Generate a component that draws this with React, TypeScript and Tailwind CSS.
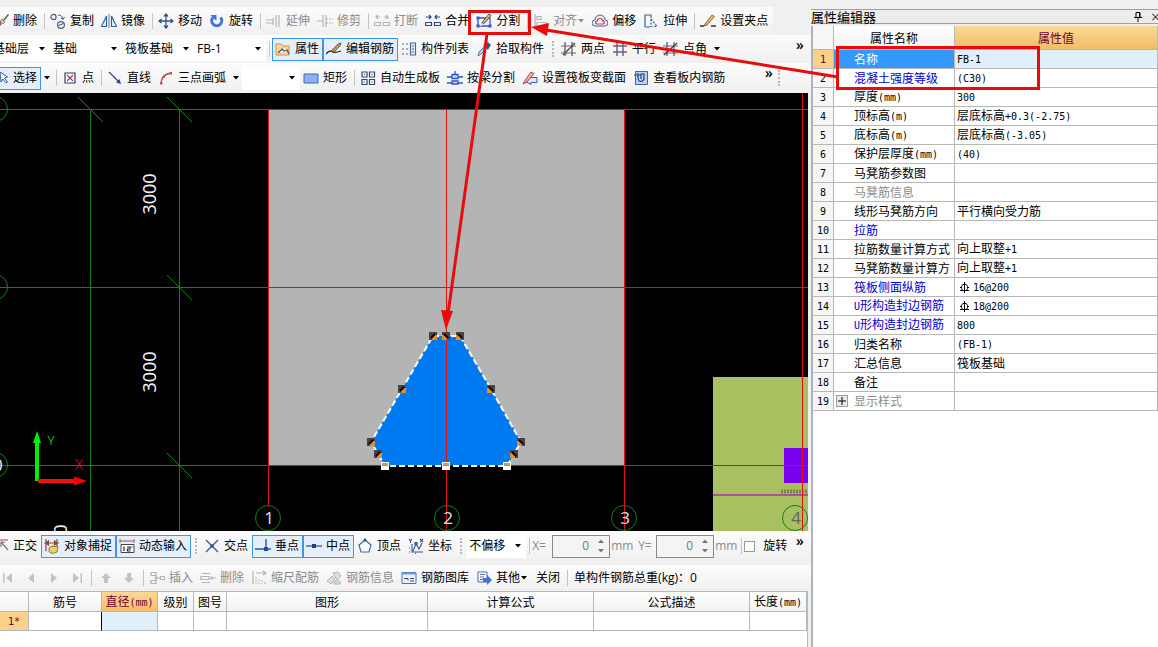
import { ReactNode, useState } from 'react';

const UI_FONT = "font-['Open_Sans','Noto_Sans_CJK_SC',sans-serif]";
const GRID_FONT = "font-['Noto_Sans_CJK_SC',sans-serif]";

const blue = '#2f5fa8';
const gray = '#b4b4b4';

const icons: Record<string, ReactNode> = {
  brush: (
    <>
      <path d="M2 9l5-1 2 3-4 4-4-1z" fill="#8a55b0" />
      <path d="M7 8l2-2 3 3-2 2z" fill="#d9c27a" stroke="#8a6d2a" strokeWidth=".6" />
      <path d="M10 7l5-6 1 1-5 6z" fill="#555" />
    </>
  ),
  copy: (
    <g fill="none" stroke="#4a5f86" strokeWidth="1.2">
      <circle cx="3.5" cy="4" r="2.6" />
      <circle cx="11" cy="12" r="3.4" />
      <path d="M8.5 12.5l5-2" />
      <path d="M8 2c3 0 4 1 5 4m-2-1l2 1.500 1.500-2.500" strokeWidth="1" />
    </g>
  ),
  mirror: (
    <g fill="none" stroke={blue} strokeWidth="1.200">
      <path d="M5.500 3v10.500h-5zM10.500 3v10.500h5z" />
      <path d="M8 1v14" stroke="#7790bd" />
    </g>
  ),
  move: <path d="M8 1v14M1 8h14M6 3.500L8 1l2 2.500M6 12.500L8 15l2-2.500M3.500 6L1 8l2.500 2M12.500 6L15 8l-2.500 2" fill="none" stroke="#35538a" strokeWidth="1.300" />,
  rotate: (
    <>
      <path d="M4 4.500a5 5 0 1 0 7.500 0" fill="none" stroke="#3f74d8" strokeWidth="3" />
      <path d="M1.500 2h6v6z" fill="#3f74d8" />
    </>
  ),
  extend: (
    <g fill="none" stroke={gray} strokeWidth="1.200">
      <path d="M0 7h7M0 10h7M10 2v12M13 2v12" />
      <path d="M7 5v7" />
    </g>
  ),
  trim: (
    <g fill="none" stroke={gray} strokeWidth="1.200">
      <path d="M0 8h6M6 2v12M9 2v12M9 6h2M9 10h2" />
      <path d="M12 6h4M12 10h4" strokeDasharray="2 1" />
    </g>
  ),
  break: (
    <g fill="none" stroke={gray} strokeWidth="1.200">
      <path d="M2 4h4M10 4h4M4 2L2 4l2 2M12 2l2 2-2 2M0.500 9.500h6v3h-6zM9.500 9.500h6v3h-6z" />
    </g>
  ),
  merge: (
    <g fill="none" stroke="#2c4a86" strokeWidth="1.200">
      <path d="M1 4h5M10 4h5M4 2l2 2-2 2M12 2l-2 2 2 2M0.500 9.500h6v3h-6zM9.500 9.500h6v3h-6z" />
    </g>
  ),
  split: (
    <>
      <path d="M2 5h12v8H2z" fill="none" stroke="#2f57d0" strokeWidth="1.300" />
      <path d="M3 13L11 5l3 3-9 5z" fill="#cfe0ff" />
      <path d="M0.500 3.500h3v3h-3zM.5 11.500h3v3h-3zM12.500 11.500h3v3h-3z" fill="#2f57d0" />
      <path d="M6 9.500L13 1l2 1.500L8 10.500z" fill="#e8b860" stroke="#333" strokeWidth=".8" />
    </>
  ),
  align: <path d="M2 1v14M4 3.500h4v3H4zM4 9.500h9v4H4z" fill="none" stroke={gray} strokeWidth="1.200" />,
  offset: (
    <>
      <path d="M3 13a3 3 0 0 1 0-6 5 5 0 0 1 10 0 3 3 0 0 1 0 6z" fill="#e3ecfb" stroke="#4467a8" />
      <path d="M5 11a1.500 1.500 0 0 1 .5-3 2.500 2.500 0 0 1 5 0 1.500 1.500 0 0 1 .5 3z" fill="#fff" stroke="#d03838" strokeWidth="1.200" />
    </>
  ),
  stretch: (
    <g fill="none" stroke="#3c5f9b" strokeWidth="1.200">
      <path d="M2 14V2h6v3M2 14h5" />
      <path d="M8 6l6 7.500H8z" strokeDasharray="2 1.500" />
    </g>
  ),
  grip: (
    <>
      <path d="M0 13h4M11 13h5" stroke="#333" strokeWidth="1.500" />
      <path d="M5 11L12 2l2.500 1.500L7 12l-3 1z" fill="#e9bc62" stroke="#6b5424" strokeWidth=".8" />
    </>
  ),
  property: (
    <>
      <path d="M1 3h5l1 2h7v9H1z" fill="#fbe0b0" stroke="#d78a2c" />
      <path d="M4 7h8v5H4z" fill="#fff" stroke="#e0a050" strokeWidth=".6" />
      <path d="M3 12l4-4 2 2 3-1 2 4" fill="none" stroke="#555" strokeWidth="1.300" />
    </>
  ),
  editBar: (
    <>
      <path d="M0 13c3-4 5-3 7-2s5 0 8-1" fill="none" stroke="#222" strokeWidth="1.300" />
      <path d="M5 10L12 3l3-1-1 3-6 6z" fill="#c79a50" stroke="#4b3a1b" strokeWidth=".7" />
    </>
  ),
  list: (
    <g fill="none" stroke="#4c6890" strokeWidth="1.200">
      <path d="M1 3h2M1 8h2M1 13h2M5 3h2M5 8h2M5 13h2" />
      <path d="M9.500 2h5v12h-5z" fill="#e4ecf8" />
      <path d="M11 5h2M11 8h2M11 11h2" />
    </g>
  ),
  picker: (
    <>
      <path d="M2 15l1-4 5-5 2 2-5 5z" fill="#b8d2f0" stroke="#456fae" strokeWidth=".9" />
      <path d="M7 4l5 5 1-2 2-3-3-3-3 2z" fill="#2d5a9e" />
    </>
  ),
  twoPoint: (
    <g fill="none" strokeWidth="1.200">
      <path d="M0 5h15M0 12h15" stroke="#a0506a" />
      <path d="M4 1v14M11 1v14" stroke="#4a5568" />
      <path d="M2 14L14 2" stroke="#444" />
      <path d="M2.500 10.500h3v3h-3z" fill="#3c8a4a" />
    </g>
  ),
  parallel: (
    <g fill="none" strokeWidth="1.300">
      <path d="M1 5h14M1 11h14" stroke="#a0506a" />
      <path d="M5 1v14M11 1v14" stroke="#4a5a88" />
    </g>
  ),
  pointAngle: (
    <g fill="none" strokeWidth="1.200">
      <path d="M0 5h15M0 12h15" stroke="#a0506a" />
      <path d="M4 1v14M11 1v14" stroke="#5a4a78" />
      <path d="M1 14L14 2" stroke="#444" />
    </g>
  ),
  cursor: <path d="M7 2l1 10 2-3 3 4 1.500-1-3-4 3-1z" fill="#fff" stroke={blue} />,
  point: (
    <>
      <path d="M3 3h10v10H3z" fill="#fff" stroke="#2b3f78" strokeWidth="1.200" />
      <path d="M5 5l6 6M11 5l-6 6" stroke="#b03060" strokeWidth="1.200" />
    </>
  ),
  line: (
    <>
      <path d="M2 2l10 10" stroke="#2b4a86" strokeWidth="1.300" />
      <path d="M14 14l-5-1.500 3.500-3.500z" fill="#2b4a86" />
    </>
  ),
  arc: (
    <>
      <path d="M3 14C3 8 6 4 13 3" fill="none" stroke="#a84848" strokeWidth="1.300" />
      <path d="M2 12h2.500v2.500H2zM5 5.500h2V8H5zM11.500 2H14v2.500h-2.500z" fill="#c65656" />
    </>
  ),
  rect: <path d="M1 4h14v9H1z" fill="#8fb0ee" stroke="#3e66c0" />,
  autoSlab: <path d="M2 2h5v5H2zM9.500 2h5v5h-5zM2 9.500h5v5H2zM9.500 9.500h5v5h-5zM4 4.500h1M11.500 4.500h1M4 12h1M11.500 12h1" fill="none" stroke="#334a78" strokeWidth="1.200" />,
  beamSplit: (
    <g fill="none" stroke="#2f55c0" strokeWidth="1.300">
      <path d="M0 7h5M11 7h5M0 13h16" />
      <path d="M5 4.500h6v4H5zM8 1v3M5 11h6v3H5z" fill="#c7d8fa" />
    </g>
  ),
  section: (
    <>
      <path d="M8 7.500h7v5H9v2l-6-3.500z" fill="#dfe8fb" stroke="#3a5bb0" />
      <path d="M2 12L9 2l3 1.500L5 12l-4 2z" fill="#f0b0a8" stroke="#a23a30" strokeWidth=".9" />
    </>
  ),
  viewBar: (
    <>
      <path d="M2.500 1.500h12v13h-12z" fill="#bcd3f6" stroke="#3f66b0" />
      <path d="M1 5h7M5 3v5c0 5 6 4 6 0V4h-3v5" fill="none" stroke="#24467e" strokeWidth="1.200" />
    </>
  ),
  ortho: (
    <>
      <path d="M1 2h14" stroke="#c77" strokeWidth="1.500" />
      <path d="M8 4l7 8M8 4v5M8 4l4 .5" fill="none" stroke="#777" strokeWidth="1.200" />
    </>
  ),
  snap: (
    <>
      <path d="M0 5h15M2 1v12M13 1v8M2 5l2.500-2v4zM13 5l-2.500-2v4z" fill="none" stroke="#8f4a3a" strokeWidth="1.200" />
      <path d="M5 10l3-2 6 1-1 5-5 1.500-3-2z" fill="#f0cf6a" stroke="#9a7a25" />
    </>
  ),
  dynInput: (
    <>
      <path d="M1 3h14M1 1v4M15 1v4" stroke="#a55" />
      <path d="M2 6.500h13v8H2z" fill="#fff" stroke="#444" />
      <path d="M5 8.500v4.500M8 9h3v2H8.500v2h3M13 8.500v1" fill="none" stroke="#222" strokeWidth="1.200" />
    </>
  ),
  cross: (
    <>
      <path d="M2 2l12 12M14 2L2 14" stroke="#35568f" strokeWidth="1.300" />
      <path d="M6.500 6.500h3v3h-3z" fill="#1d4f9f" />
    </>
  ),
  perp: (
    <>
      <path d="M0 11h16M11 1v10" stroke="#35568f" strokeWidth="1.400" />
      <path d="M9 9h4v4H9z" fill="#1d4f9f" />
    </>
  ),
  mid: (
    <>
      <path d="M0 8h16" stroke="#35568f" strokeWidth="1.300" />
      <path d="M6 6h4v4H6z" fill="#123f8f" />
    </>
  ),
  vertex: (
    <>
      <path d="M8 2l6 5-2 7H4L2 7z" fill="#fff" stroke="#3b6aa8" strokeWidth="1.200" />
      <circle cx="8" cy="2" r="1.500" fill="#1d4f9f" />
    </>
  ),
  coord: (
    <g fill="none" stroke="#35568f" strokeWidth="1.100">
      <path d="M4 6v8h11M5 13l3-7 3 5 3-6" />
      <path d="M1 1l1.500 2L4 1M2.500 3v2M12 1l3 3M15 1l-3 3M1 10h1M1 14h1M7 15.500h1" />
      <path d="M7 4.500h2v2H7z" fill="#35568f" />
    </g>
  ),
  insert: <path d="M2 2.500h5v3H2zM2 10.500h5v3H2zM6 8h5M8 6L6 8l2 2M11.500 6.500h4v3h-4z" fill="none" stroke={gray} strokeWidth="1.200" />,
  remove: <path d="M2 3.500h8M2 12.500h8M1 6.500h8v3H1zM10 8h6M12 6v4" fill="none" stroke={gray} strokeWidth="1.200" />,
  scaleBar: (
    <>
      <path d="M2 1v13M5 3h10M12 1l3 2-3 2" fill="none" stroke={gray} strokeWidth="1.200" />
      <path d="M5 7v7M8 9v5M11 10v4M14 12v2" stroke={gray} strokeDasharray="2 1" />
    </>
  ),
  barInfo: <path d="M1 11l5-5 3 3-4 5zM7 3l5-1 3 4-4 4zM8 11h6v3H8z" fill="#dcdcdc" stroke={gray} />,
  barLib: (
    <>
      <path d="M1 2.500h14v11H1z" fill="#eef4fd" stroke="#4573b8" />
      <path d="M1 2.500h14v2H1z" fill="#6b9be0" />
      <path d="M3 8.500h4v2M9 8.500h4M9 11h4" fill="none" stroke="#345" />
    </>
  ),
  other: (
    <>
      <path d="M2 2h9v10H2z" fill="#fff" stroke="#4a6ba8" />
      <path d="M4 4.500h5M4 7h4M4 9.500h3" stroke="#4a6ba8" />
      <path d="M7 8h4V5l5 5-5 5v-3H7z" fill="#3f74d8" />
    </>
  ),
  first: <path d="M3 3h1.500v10H3zM12 3v10L6 8z" fill="#c2c2c2" />,
  prev: <path d="M11 3v10L5 8z" fill="#c2c2c2" />,
  next: <path d="M5 3v10l6-5z" fill="#c2c2c2" />,
  last: <path d="M4 3v10l6-5zM11.500 3H13v10h-1.500z" fill="#c2c2c2" />,
  up: <path d="M8 3l5 5h-3v5H6V8H3z" fill="#c2c2c2" />,
  down: <path d="M8 13l5-5h-3V3H6v5H3z" fill="#c2c2c2" />,
};

function Icon({ name }: { name: string }) {
  return (
    <svg className="size-4 shrink-0" viewBox="0 0 16 16" aria-hidden="true">
      {icons[name]}
    </svg>
  );
}

function Caret({ className = '' }: { className?: string }) {
  return (
    <svg className={`h-1 w-2 shrink-0 ${className}`} viewBox="0 0 8 4" aria-hidden="true">
      <path d="M1 0h6L4 3.500z" fill="currentColor" />
    </svg>
  );
}

interface ToolProps {
  icon: string;
  label: string;
  active?: boolean;
  disabled?: boolean;
  menu?: boolean;
}

function Tool({ icon, label, active, disabled, menu }: ToolProps) {
  return (
    <button
      disabled={disabled}
      className={`flex h-[23px] shrink-0 items-center border pl-[2px] pr-[3px] whitespace-nowrap ${
        active ? 'border-[#3d96ee] bg-[#e4effb]' : 'border-transparent'
      } ${disabled ? 'text-[#8c8c8c]' : 'text-black'}`}
    >
      <Icon name={icon} />
      <span className="ml-1">{label}</span>
      {menu && <Caret />}
    </button>
  );
}

function DropArrow({ label }: { label: string }) {
  return (
    <button aria-label={label} className="flex h-[23px] w-3 shrink-0 items-center justify-center">
      <Caret />
    </button>
  );
}

function Sep() {
  return (
    <span className="flex w-[6px] shrink-0 justify-center">
      <span className="h-4 w-px bg-[#c4c4c4]" />
    </span>
  );
}

function Dots() {
  return (
    <span className="flex w-[10px] shrink-0 justify-center">
      <span className="h-4 border-l-2 border-dotted border-[#b8b8b8]" />
    </span>
  );
}

function Combo({ label, value, className }: { label: string; value: string; className: string }) {
  return (
    <div className={`relative flex h-[23px] shrink-0 items-center bg-white ${className}`}>
      <select aria-label={label} className="h-full w-full appearance-none bg-transparent pl-[3px] outline-none">
        <option>{value}</option>
      </select>
      <Caret className="pointer-events-none absolute right-1" />
    </div>
  );
}

function More() {
  return (
    <button aria-label="更多" className="mt-[2px] h-4 w-[10px] self-start text-sm leading-4 font-semibold">
      »
    </button>
  );
}

function NumberBox({ id }: { id: string }) {
  const [value, setValue] = useState(0);

  return (
    <div className="flex h-[23px] w-[58px] shrink-0 border border-[#8a8a8a] bg-[#f4f4f4] text-[#777]">
      <input
        id={id}
        value={value}
        onChange={(e) => setValue(Number(e.target.value) || 0)}
        className="w-full min-w-0 bg-transparent pr-1 text-right outline-none"
      />
      <div className="flex w-4 shrink-0 flex-col items-center justify-around">
        <button aria-label="增加" onClick={() => setValue(value + 1)}>
          <Caret className="rotate-180" />
        </button>
        <button aria-label="减少" onClick={() => setValue(value - 1)}>
          <Caret />
        </button>
      </div>
    </div>
  );
}

// Half-width characters take a narrow monospace face, Chinese keeps the grid font
function GridText({ text }: { text: string }) {
  return (
    <>
      {text.split(/([\x20-\x7e]+)/).map((part, i) =>
        i % 2 ? (
          <span key={i} className="font-['DejaVu_Sans_Mono',monospace] text-[10px]">
            {part}
          </span>
        ) : (
          part
        ),
      )}
    </>
  );
}

function Rebar() {
  return (
    <svg className="mr-1 ml-[3px] h-[11px] w-[9px] shrink-0" viewBox="0 0 9 11" role="img" aria-label="钢筋符号">
      <path d="M4.500 0v11M3 2.500h3M3 2.500C1 3 1 8 3 8.500M6 2.500c2 .5 2 5.500 0 6M0 5.500h2M7 5.500h2M0 8.500h9" fill="none" stroke="#000" />
    </svg>
  );
}

const toolbarRow = 'flex items-center bg-linear-to-b from-[#fcfcfc] to-[#f0f0f0]';

function Toolbars() {
  return (
    <div className="mt-[7px] overflow-hidden">
      <div className={`${toolbarRow} mr-[38px] -ml-[10px] h-7`}>
        <Tool icon="brush" label="删除" />
        <Sep />
        <Tool icon="copy" label="复制" />
        <Tool icon="mirror" label="镜像" />
        <Sep />
        <Tool icon="move" label="移动" />
        <Tool icon="rotate" label="旋转" />
        <Sep />
        <Tool icon="extend" label="延伸" disabled />
        <Tool icon="trim" label="修剪" disabled />
        <Sep />
        <Tool icon="break" label="打断" disabled />
        <Tool icon="merge" label="合并" />
        <Tool icon="split" label="分割" />
        <Sep />
        <Tool icon="align" label="对齐" disabled menu />
        <Tool icon="offset" label="偏移" />
        <Tool icon="stretch" label="拉伸" />
        <Sep />
        <Tool icon="grip" label="设置夹点" />
      </div>
      <div className={`${toolbarRow} -ml-[10px] h-7 pr-[6px]`}>
        <Combo label="楼层" value="基础层" className="w-[60px]" />
        <Combo label="构件分类" value="基础" className="w-[72px]" />
        <Combo label="构件类型" value="筏板基础" className="w-[72px]" />
        <Combo label="构件" value="FB-1" className="w-[72px]" />
        <Sep />
        <Tool icon="property" label="属性" active />
        <Tool icon="editBar" label="编辑钢筋" active />
        <Tool icon="list" label="构件列表" />
        <Tool icon="picker" label="拾取构件" />
        <Dots />
        <Tool icon="twoPoint" label="两点" />
        <Tool icon="parallel" label="平行" />
        <Tool icon="pointAngle" label="点角" />
        <DropArrow label="辅轴选项" />
        <span className="flex-1" />
        <More />
      </div>
      <div className={`${toolbarRow} -ml-[10px] h-[30px] pr-[27px]`}>
        <Tool icon="cursor" label="选择" active />
        <DropArrow label="选择方式" />
        <Sep />
        <Tool icon="point" label="点" />
        <Sep />
        <Tool icon="line" label="直线" />
        <Tool icon="arc" label="三点画弧" />
        <DropArrow label="画弧方式" />
        <Combo label="半径" value="" className="w-[58px]" />
        <Tool icon="rect" label="矩形" />
        <Sep />
        <Tool icon="autoSlab" label="自动生成板" />
        <Tool icon="beamSplit" label="按梁分割" />
        <Tool icon="section" label="设置筏板变截面" />
        <Tool icon="viewBar" label="查看板内钢筋" />
        <span className="flex-1" />
        <More />
        <Dots />
      </div>
    </div>
  );
}

const slab = '433,336 460,336 491,389 521,442 514,454 507,466 385,466 378,454 371,442 402,389';
const darkGrips = [[433, 336], [446, 336], [460, 336], [402, 389], [491, 389], [371, 442], [521, 442], [378, 454], [514, 454]];
const whiteGrips = [[385, 466], [446, 466], [507, 466]];
const axisRows = [109, 287, 465];
const ticks = [[90, 109], [179, 109], [179, 287], [179, 465]];
const bubbles = [
  { x: 268, label: '1', color: '#ddd' },
  { x: 447, label: '2', color: '#ddd' },
  { x: 624, label: '3', color: '#ddd' },
  { x: 795, label: '4', color: '#666' },
];

function Drawing() {
  return (
    <div className="mr-[3px] min-h-[438px] flex-1 bg-black">
      <svg className="block h-[438px] w-full font-['Noto_Sans',sans-serif]" role="img" aria-label="绘图区">
        <g transform="translate(0 -93)">
          <rect x="269" y="110" width="356" height="356" fill="#b4b4b4" />
          <rect x="713" y="377" width="100%" height="154" fill="#a8c060" />
          <rect x="784" y="448" width="100%" height="35" fill="#7a00f0" />
          <rect x="713" y="494" width="100%" height="2" fill="#b0509a" />
          <path d="M781 491.500h27" stroke="#7b8256" strokeWidth="4" strokeDasharray="2 1" />

          {axisRows.map((y) => (
            <rect key={y} y={y} width="268" height="1" fill="#128012" />
          ))}
          <g fill="none" stroke="#128012">
            {axisRows.map((y) => (
              <circle key={y} cx="-5" cy={y} r="12.500" />
            ))}
            <path d="M90.500 109v422M179.500 109v422" />
            {ticks.map(([x, y]) => (
              <path key={`${x}-${y}`} d={`M${x - 12} ${y - 12}l25 25`} />
            ))}
          </g>

          <polygon points={slab} fill="#007af0" />
          {axisRows.map((y) => (
            <rect key={y} x="268" y={y} width="100%" height="1" fill="#e01010" />
          ))}
          <path d="M268.500 109v397M446.500 109v422M624.500 109v422M802.500 93v438" stroke="#e01010" />
          <path d="M385 466.500h122" stroke="#000" strokeWidth="2" />
          <polygon points={slab} fill="none" stroke="#fff" strokeWidth="2" strokeDasharray="6 3" />

          {darkGrips.map(([x, y]) => (
            <g key={`${x}-${y}`}>
              <rect x={x - 4} y={y - 4} width="8" height="8" fill="#454545" />
              <rect x={x < 446 ? x - 1 : x - 4} y={y - 1} width="5" height="5" fill="#f08a20" />
              <path d={x < 446 ? `M${x - 2} ${y + 2}l4-4` : `M${x - 2} ${y - 2}l4 4`} stroke="#000" strokeWidth="2" />
            </g>
          ))}
          {whiteGrips.map(([x, y]) => (
            <g key={x}>
              <rect x={x - 4} y={y - 4} width="8" height="8" fill="#fff" />
              <path d={`M${x - 3} ${y - 3}h6v3h-6z`} fill="#c9a050" />
              <path d={`M${x - 3} ${y - 0.5}h6`} stroke="#40c0b0" />
            </g>
          ))}

          {bubbles.map((b) => (
            <g key={b.label}>
              <circle cx={b.x} cy="518" r="12.500" fill="none" stroke="#128012" />
              <text x={b.x + 1} y="524" textAnchor="middle" fontSize="17" fill={b.color}>
                {b.label}
              </text>
            </g>
          ))}
          <g fontSize="18" fill="#f0f0f0" textAnchor="middle">
            <text transform="translate(156 194) rotate(-90)">3000</text>
            <text transform="translate(156 372) rotate(-90)">3000</text>
            <text transform="translate(67 545) rotate(-90)">3000</text>
            <text x="-2" y="471" fontSize="16">0</text>
          </g>

          <path d="M37 481V440" stroke="#00f000" strokeWidth="4" />
          <path d="M37 431l4 12h-8z" fill="#00f000" />
          <path d="M38 481h38" stroke="#f01010" strokeWidth="4" />
          <path d="M87 481l-13 4.500v-9z" fill="#f00" />
          <text x="51" y="445" textAnchor="middle" fontSize="13" fontWeight="300" fill="#40e040">Y</text>
          <text x="79" y="470" textAnchor="middle" fontSize="14" fontWeight="300" fill="#e01010">X</text>
        </g>
      </svg>
    </div>
  );
}

function SnapBar() {
  return (
    <div className={`${toolbarRow} -ml-[10px] h-[30px] pr-[6px]`}>
      <Tool icon="ortho" label="正交" />
      <Tool icon="snap" label="对象捕捉" active />
      <Tool icon="dynInput" label="动态输入" active />
      <Dots />
      <Tool icon="cross" label="交点" />
      <Tool icon="perp" label="垂点" active />
      <Tool icon="mid" label="中点" active />
      <Tool icon="vertex" label="顶点" />
      <Tool icon="coord" label="坐标" />
      <Dots />
      <Combo label="偏移方式" value="不偏移" className="w-[60px]" />
      <Sep />
      <label htmlFor="offset-x" className="w-5 shrink-0 text-[#8c8c8c]">X=</label>
      <NumberBox id="offset-x" />
      <span className="w-7 shrink-0 pl-px text-[#8c8c8c]">mm</span>
      <label htmlFor="offset-y" className="w-[18px] shrink-0 text-[#8c8c8c]">Y=</label>
      <NumberBox id="offset-y" />
      <span className="w-6 shrink-0 pl-px text-[#8c8c8c]">mm</span>
      <Sep />
      <label className="flex shrink-0 items-center gap-2">
        <input type="checkbox" className="size-[11px] appearance-none border border-[#9a9a9a] bg-white checked:bg-[#3d96ee]" />
        旋转
      </label>
      <span className="flex-1" />
      <More />
    </div>
  );
}

const navFirst = [
  { icon: 'first', label: '第一条' },
  { icon: 'prev', label: '上一条' },
  { icon: 'next', label: '下一条' },
  { icon: 'last', label: '最后一条' },
];
const navMove = [
  { icon: 'up', label: '上移' },
  { icon: 'down', label: '下移' },
];

function NavButton({ icon, label }: { icon: string; label: string }) {
  return (
    <button disabled aria-label={label} className="flex w-[23px] shrink-0 justify-center">
      <Icon name={icon} />
    </button>
  );
}

function RebarBar() {
  return (
    <div className={`${toolbarRow} mt-1 -ml-1 h-[26px]`}>
      {navFirst.map((n) => <NavButton key={n.icon} {...n} />)}
      <Sep />
      {navMove.map((n) => <NavButton key={n.icon} {...n} />)}
      <Sep />
      <Tool icon="insert" label="插入" disabled />
      <Tool icon="remove" label="删除" disabled />
      <Tool icon="scaleBar" label="缩尺配筋" disabled />
      <Tool icon="barInfo" label="钢筋信息" disabled />
      <Tool icon="barLib" label="钢筋图库" />
      <Tool icon="other" label="其他" menu />
      <button className="shrink-0 px-1">关闭</button>
      <Sep />
      <span className="shrink-0 pl-1 whitespace-nowrap">单构件钢筋总重(kg)：0</span>
    </div>
  );
}

const columns = [
  { title: '', width: 'w-[29px]' },
  { title: '筋号', width: 'w-[73px]' },
  { title: '直径(mm)', width: 'w-[56px]' },
  { title: '级别', width: 'w-[36px]' },
  { title: '图号', width: 'w-[33px]' },
  { title: '图形', width: '' },
  { title: '计算公式', width: 'w-[166px]' },
  { title: '公式描述', width: 'w-[156px]' },
  { title: '长度(mm)', width: 'w-[57px]' },
];

function RebarTable() {
  return (
    <div className={`mr-[3px] h-14 overflow-hidden border-r border-[#b8b8b8] bg-white ${GRID_FONT}`}>
      <table className="w-full table-fixed border-separate border-spacing-0 text-center">
        <thead>
          <tr className="h-[21px]">
            {columns.map((c, i) => (
              <th
                key={i}
                className={`border-t border-r border-b border-[#b8b8b8] bg-linear-to-b p-0 leading-4 font-normal whitespace-nowrap ${c.width} ${
                  i === 2 ? 'from-[#fbd896] to-[#f3c069] text-[#700030]' : 'from-white to-[#f2f2f2]'
                }`}
              >
                <GridText text={c.title} />
              </th>
            ))}
          </tr>
        </thead>
        <tbody>
          <tr className="h-[19px]">
            {columns.map((c, i) => (
              <td
                key={i}
                className={`border-r border-b border-[#b8b8b8] p-0 leading-4 ${i === 0 ? 'bg-[#fbd08a] text-[#700030]' : ''} ${
                  i === 1 ? 'border-r-black' : ''
                } ${i === 2 ? 'bg-[#e0effc]' : ''}`}
              >
                {i === 0 && <GridText text="1*" />}
              </td>
            ))}
          </tr>
        </tbody>
      </table>
    </div>
  );
}

interface Property {
  name: string;
  value?: string;
  tone?: 'blue' | 'gray';
  rebar?: boolean;
  group?: boolean;
}

const properties: Property[] = [
  { name: '名称', value: 'FB-1' },
  { name: '混凝土强度等级', value: '(C30)', tone: 'blue' },
  { name: '厚度(mm)', value: '300' },
  { name: '顶标高(m)', value: '层底标高+0.3(-2.75)' },
  { name: '底标高(m)', value: '层底标高(-3.05)' },
  { name: '保护层厚度(mm)', value: '(40)' },
  { name: '马凳筋参数图' },
  { name: '马凳筋信息', tone: 'gray' },
  { name: '线形马凳筋方向', value: '平行横向受力筋' },
  { name: '拉筋', tone: 'blue' },
  { name: '拉筋数量计算方式', value: '向上取整+1' },
  { name: '马凳筋数量计算方', value: '向上取整+1' },
  { name: '筏板侧面纵筋', value: '16@200', tone: 'blue', rebar: true },
  { name: 'U形构造封边钢筋', value: '18@200', tone: 'blue', rebar: true },
  { name: 'U形构造封边钢筋', value: '800', tone: 'blue' },
  { name: '归类名称', value: '(FB-1)' },
  { name: '汇总信息', value: '筏板基础' },
  { name: '备注' },
  { name: '显示样式', tone: 'gray', group: true },
];

function nameColor(p: Property, selected: boolean) {
  if (selected) return 'bg-[#3399ff] text-white';
  if (p.tone === 'blue') return 'text-[#0000d0]';
  if (p.tone === 'gray') return 'text-[#8c8c8c]';
  return '';
}

function PropertyPanel() {
  const [selected, setSelected] = useState(0);
  const cell = 'border-r border-b border-[#b8b8b8] p-0 leading-4';

  return (
    <aside className={`flex w-[347px] shrink-0 flex-col pt-[9px] ${GRID_FONT}`}>
      <div className="flex h-[15px] items-center border-y border-[#a0a0a0] bg-[#ececec]">
        <h2 className="flex-1 text-[13px] leading-3">属性编辑器</h2>
        <button aria-label="固定" className="mr-[10px]">
          <svg className="h-[10px] w-2" viewBox="0 0 8 10">
            <path d="M2 0.500h4v5H2zM0 5.500h8M4 6v4M5.500 1v4" fill="none" stroke="#000" />
          </svg>
        </button>
        <button aria-label="关闭">
          <svg className="h-2 w-[6px]" viewBox="0 0 6 8">
            <path d="M0 0.500l7 7M0 7.500l7-7" stroke="#000" />
          </svg>
        </button>
      </div>
      <div className="mt-[2px] flex-1 border-l-2 border-[#a9b4c0] bg-white">
        <table className="w-full table-fixed border-separate border-spacing-0">
          <thead>
            <tr className="h-6">
              <th className={`${cell} w-[21px] bg-[#f6f6f6]`} />
              <th className={`${cell} w-[121px] bg-linear-to-b from-white to-[#f2f2f2] font-normal`}>属性名称</th>
              <th className={`${cell} bg-linear-to-b from-[#fbd896] to-[#f1bd62] font-normal text-[#700030]`}>属性值</th>
            </tr>
          </thead>
          <tbody>
            {properties.map((p, i) => (
              <tr key={i} className="h-[19px]" onClick={() => setSelected(i)}>
                <td className={`${cell} text-center ${i === selected ? 'bg-[#fbd08a] text-[#700030]' : 'bg-[#f6f6f6]'}`}>
                  <GridText text={String(i + 1)} />
                </td>
                <td className={`${cell} ${nameColor(p, i === selected)}`}>
                  <div className="flex h-4 items-center whitespace-nowrap">
                    <span className="w-5 shrink-0 pl-[2px]">
                      {p.group && (
                        <button aria-label="展开" className="block size-3 border border-[#a0a0a0] bg-[#e8e8e8] text-black">
                          <svg className="size-[10px]" viewBox="0 0 10 10">
                            <path d="M1 5h8M5 1v8" stroke="currentColor" />
                          </svg>
                        </button>
                      )}
                    </span>
                    <span>
                      <GridText text={p.name} />
                    </span>
                  </div>
                </td>
                <td className={`${cell} ${i === selected ? 'bg-[#e0effc]' : ''}`}>
                  <div className="flex h-4 items-center pl-[2px] whitespace-nowrap">
                    {p.rebar && <Rebar />}
                    <span>
                      <GridText text={p.value ?? ''} />
                    </span>
                  </div>
                </td>
              </tr>
            ))}
          </tbody>
        </table>
      </div>
    </aside>
  );
}

// Red callouts that lead from the toolbar to the slab and the property rows
function Callouts() {
  return (
    <svg className="pointer-events-none absolute top-0 left-0 h-full w-full" aria-hidden="true">
      <g fill="none" stroke="#e80c0c" strokeWidth="3">
        <path d="M469.500 11.500h60v22h-60z" />
        <path d="M837.500 47.500h201v41h-201z" />
        <path d="M838 77L546 30M487 34l-39 280" />
      </g>
      <path d="M531 27l18-4-2 13zM446 330l-5-20 12 1z" fill="#e80c0c" />
    </svg>
  );
}

export default function App() {
  return (
    <div className={`relative flex min-h-screen overflow-hidden bg-[#f0f0f0] text-xs text-black ${UI_FONT}`}>
      <main className="flex min-w-0 flex-1 flex-col overflow-hidden">
        <Toolbars />
        <Drawing />
        <SnapBar />
        <RebarBar />
        <RebarTable />
      </main>
      <PropertyPanel />
      <Callouts />
    </div>
  );
}
